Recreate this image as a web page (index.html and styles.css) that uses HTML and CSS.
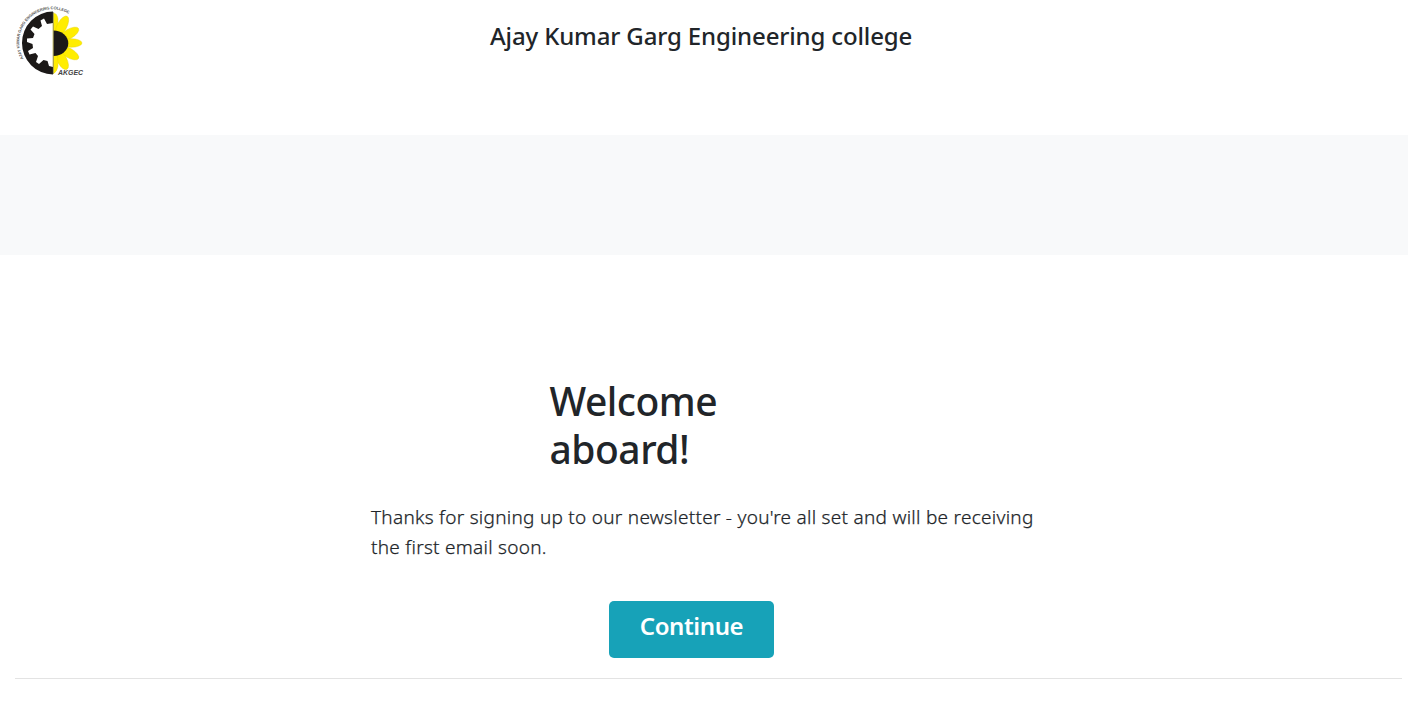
FILE: index.html
```
<!DOCTYPE html>
<html lang="en">
<head>
<meta charset="utf-8">
<title>Welcome aboard</title>
<link rel="stylesheet" href="styles.css">
</head>
<body>
<header class="header">
  <svg class="logo" viewBox="0 0 84 80" role="img" aria-label="AKGEC">
    <defs><path id="ring" d="M23.500 58.500A33 33 0 0 1 76.300 19.700"/></defs>
    <g fill="#ffed00" stroke="#e3cf00" stroke-width=".4">
      <path d="M53 13Q57 13 58 19L57 43H53Z"/>
      <ellipse cx="62" cy="26" rx="4.800" ry="11" transform="rotate(28 62 26)"/>
      <ellipse cx="69" cy="34" rx="4.700" ry="11" transform="rotate(60 69 34)"/>
      <ellipse cx="71" cy="43" rx="11" ry="4.300"/>
      <ellipse cx="69" cy="53" rx="4.700" ry="11" transform="rotate(120 69 53)"/>
      <ellipse cx="62" cy="60" rx="4.800" ry="10.500" transform="rotate(152 62 60)"/>
      <path d="M53 74Q57 72 58 66L57 43H53Z"/>
    </g>
    <path fill="#1c1918" d="M53 11.500A31 31.500 0 0 0 53 74.500V67L49 66 47.500 61 43.500 60 39 64 36 62 38 56 35.500 53 29.500 54.500 28 51 33 48 32.500 44 27 42 27 38.500 33 38 34.500 34 30.500 29.500 33 26.500 38.500 29 42 26 40.500 20.500 44 18.500 47 24 53 23Z"/>
    <path fill="#1c1918" d="M53.500 30.500A14.500 12.500 0 0 1 53.500 56Z"/>
    <path stroke="#777" stroke-width=".7" d="M53.300 12V74"/>
    <text class="ring-text"><textPath href="#ring">AJAY KUMAR GARG ENGINEERING COLLEGE</textPath></text>
    <text class="logo-text" x="58" y="74.500" textLength="25" lengthAdjust="spacingAndGlyphs">AKGEC</text>
  </svg>
  <h4 class="college">Ajay Kumar Garg Engineering college</h4>
</header>
<div class="band"></div>
<main class="content">
  <h1 class="title">Welcome aboard!</h1>
  <p class="message">Thanks for signing up to our newsletter - you're all set and will be receiving the first email soon.</p>
  <a class="button">Continue</a>
  <hr class="rule">
</main>
</body>
</html>
```
FILE: styles.css
```
* { box-sizing: border-box; }
body { margin: 0; background: #fff; color: #212529; font-family: "Segoe UI", "Noto Sans", "Open Sans", sans-serif; }
.header { display: flex; height: 135px; }
.logo { flex: none; width: 84px; height: 80px; }
.ring-text { font: 700 4px "Liberation Sans", sans-serif; letter-spacing: -.1px; fill: #555; }
.logo-text { font: italic 700 7px "Liberation Sans", sans-serif; fill: #444; }
.college { margin: 21px 0 0 406px; font-size: 24px; line-height: 29px; font-weight: 500; letter-spacing: -.14px; white-space: nowrap; }
.band { height: 120px; background: #f8f9fa; }
.content { display: flex; flex-direction: column; padding: 122px 6px 0 15px; }
.title { width: 180px; margin: 0 0 0 534.5px; font-size: 39px; line-height: 48px; font-weight: 500; letter-spacing: -.5px; }
.message { width: 680px; margin: 29px 0 0 356px; font-size: 19px; line-height: 30px; font-weight: 300; letter-spacing: .27px; -webkit-text-stroke: .25px #212529; }
.button { width: 165px; height: 57px; margin: 39px 0 0 594px; padding-top: 10px; border-radius: 5px; background: #17a2b8; color: #fff; font-size: 24px; line-height: 29px; font-weight: 600; letter-spacing: -.4px; text-align: center; }
.rule { width: 100%; height: 1px; margin: 20px 0 0; border: 0; background: #e3e3e3; }
```
